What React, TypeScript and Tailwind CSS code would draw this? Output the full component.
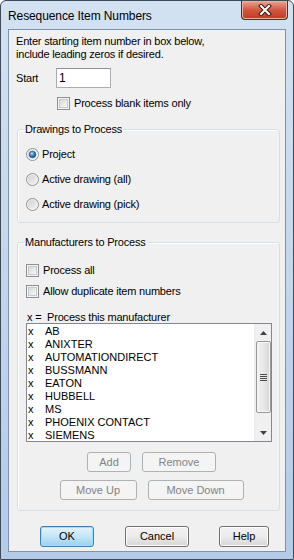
const makers = [
  'AB',
  'ANIXTER',
  'AUTOMATIONDIRECT',
  'BUSSMANN',
  'EATON',
  'HUBBELL',
  'MS',
  'PHOENIX CONTACT',
  'SIEMENS',
]

export default function App() {
  return (
    <div className="h-[560px] w-[294px] bg-white font-['Liberation_Sans',Arial,sans-serif] text-[11px] leading-[13px] text-black">
      <div className="flex h-full w-full flex-col rounded-t-[6px] border border-[#3f4a57] bg-linear-to-b from-[#d3e2f2] via-[#c2d6ec] to-[#b3cbe6] px-[7px] pb-[7px]">
        <TitleBar />
        <div className="flex flex-1 flex-col border border-[#7d92ac] bg-[#f0f0f0] pl-[7px] tracking-[-0.2px]">
          <p className="mt-[5px]">
            Enter starting item number in box below,
            <br />
            include leading zeros if desired.
          </p>
          <div className="mt-[7px] flex h-[20px] items-center">
            <span className="w-[40px]">Start</span>
            <div className="flex h-[20px] w-[55px] items-center border border-[#abadb3] border-t-[#8e9297] bg-white pl-[2px] text-[12px]">
              1
            </div>
          </div>
          <div className="ml-[41px] mt-[9px] flex items-center gap-[4px]">
            <CheckBox />
            <span>Process blank items only</span>
          </div>

          <GroupBox title="Drawings to Process" className="mt-[13px]">
            <div className="flex flex-col gap-[12px] pb-[11px] pt-[12px]">
              <RadioRow id="r0" label="Project" checked />
              <RadioRow id="r1" label="Active drawing (all)" />
              <RadioRow id="r2" label="Active drawing (pick)" />
            </div>
          </GroupBox>

          <GroupBox title="Manufacturers to Process" className="mt-[13px]">
            <div className="flex flex-col pb-[10px] pt-[15px]">
              <div className="flex items-center gap-[4px] pl-[1px]">
                <CheckBox />
                <span>Process all</span>
              </div>
              <div className="mt-[8px] flex items-center gap-[4px] pl-[1px]">
                <CheckBox />
                <span>Allow duplicate item numbers</span>
              </div>
              <p className="mt-[13px] h-[12px] pl-[2px] leading-[12px]">x =&nbsp; Process this manufacturer</p>
              <ListBox />
              <div className="mt-[10px] flex justify-center gap-[11px] pr-[1px]">
                <DisabledButton label="Add" width="w-[44px]" />
                <DisabledButton label="Remove" width="w-[74px]" />
              </div>
              <div className="mt-[8px] flex justify-center gap-[11px] pr-[1px]">
                <DisabledButton label="Move Up" width="w-[77px]" />
                <DisabledButton label="Move Down" width="w-[96px]" />
              </div>
            </div>
          </GroupBox>

          <div className="mt-[15px] flex pl-[24px] tracking-normal">
            <button className="flex h-[21px] w-[54px] items-center justify-center rounded-[3px] border border-[#3c7fb1] bg-linear-to-b from-[#e5f4fc] via-[#c4e5f6] to-[#98d1ef] shadow-[inset_0_0_0_1px_#9be1fd]">
              OK
            </button>
            <button className="ml-[31px] flex h-[21px] w-[64px] items-center justify-center rounded-[3px] border border-[#707070] bg-linear-to-b from-[#f2f2f2] via-[#ebebeb] to-[#d6d6d6] shadow-[inset_0_0_0_1px_#fcfcfc]">
              Cancel
            </button>
            <button className="ml-[30px] flex h-[21px] w-[50px] items-center justify-center rounded-[3px] border border-[#707070] bg-linear-to-b from-[#f2f2f2] via-[#ebebeb] to-[#d6d6d6] shadow-[inset_0_0_0_1px_#fcfcfc]">
              Help
            </button>
          </div>
        </div>
      </div>
    </div>
  )
}

function TitleBar() {
  return (
    <div className="flex h-[28px] items-start justify-between">
      <span className="pt-[8px] text-[12px] leading-[14px] tracking-[-0.1px] text-black">Resequence Item Numbers</span>
      <button className="mr-[-2px] flex h-[19px] w-[47px] items-center justify-center rounded-b-[4px] border border-t-0 border-[#5a2a24] bg-linear-to-b from-[#e8a593] via-[#d2553f] to-[#c23a22] shadow-[inset_0_0_0_1px_#eab0a4]">
        <svg width="14" height="12" viewBox="0 0 14 12">
          <path d="M3 2 L11 10 M11 2 L3 10" stroke="#3a1a14" strokeWidth="4" strokeLinecap="square" />
          <path d="M3 2 L11 10 M11 2 L3 10" stroke="#ffffff" strokeWidth="2" strokeLinecap="square" />
        </svg>
      </button>
    </div>
  )
}

function GroupBox({
  title,
  className,
  children,
}: {
  title: string
  className?: string
  children: React.ReactNode
}) {
  return (
    <fieldset className={`ml-[1px] w-[263px] rounded-[3px] border border-[#d5dfe5] shadow-[inset_1px_1px_0_#ffffff] ${className ?? ''}`}>
      <legend className="ml-[6px] px-[1px] leading-[13px]">{title}</legend>
      <div className="pl-[7px]">{children}</div>
    </fieldset>
  )
}

function CheckBox() {
  return (
    <span className="flex h-[13px] w-[13px] shrink-0 items-center justify-center border border-[#8f8f8f] bg-[#f4f4f4]">
      <span className="h-[9px] w-[9px] border border-[#c5cace] bg-linear-to-br from-[#d6d9dd] to-[#f7f7f7]" />
    </span>
  )
}

function RadioRow({ id, label, checked }: { id: string; label: string; checked?: boolean }) {
  return (
    <div className="flex h-[13px] items-center gap-[3px] pl-[1px]">
      <svg width="13" height="13" viewBox="0 0 13 13" className="shrink-0">
        <defs>
          <linearGradient id={`${id}g`} x1="0" y1="0" x2="1" y2="1">
            <stop offset="0" stopColor="#cdcdcd" />
            <stop offset="1" stopColor="#f8f8f8" />
          </linearGradient>
          <radialGradient id={`${id}b`} cx="0.4" cy="0.35" r="0.7">
            <stop offset="0" stopColor="#c2e4f6" />
            <stop offset="0.45" stopColor="#3b8ec6" />
            <stop offset="1" stopColor="#0c3a66" />
          </radialGradient>
        </defs>
        <circle cx="6.5" cy="6.5" r="6" fill={`url(#${id}g)`} stroke="#8e8f8f" />
        <circle cx="6.5" cy="6.5" r="5" fill="none" stroke="#f4f4f4" strokeWidth="0.8" />
        {checked && <circle cx="6.5" cy="6.5" r="3.3" fill={`url(#${id}b)`} stroke="#1f4f7d" strokeWidth="0.6" />}
      </svg>
      <span>{label}</span>
    </div>
  )
}

function ListBox() {
  return (
    <div className="ml-[1px] flex h-[119px] w-[246px] border border-[#828790] bg-white tracking-normal">
      <div className="flex flex-1 flex-col pl-[1px] pt-[1px]">
        {makers.map((name) => (
          <div key={name} className="flex h-[13px] items-center">
            <span className="w-[17px]">x</span>
            <span>{name}</span>
          </div>
        ))}
      </div>
      <Scrollbar />
    </div>
  )
}

function Scrollbar() {
  return (
    <div className="flex w-[17px] flex-col items-center border-l border-[#ebebeb] bg-[#f0f0f0]">
      <div className="flex h-[17px] w-full items-center justify-center">
        <svg width="7" height="4" viewBox="0 0 7 4">
          <path d="M3.5 0 L7 4 L0 4 Z" fill="#404040" />
        </svg>
      </div>
      <div className="flex h-[72px] w-[15px] flex-col items-center justify-center gap-[1px] rounded-[2px] border border-[#979797] bg-linear-to-r from-[#f1f1f1] via-[#e8e8e8] to-[#d4d4d4] shadow-[inset_0_0_0_1px_#f8f8f8]">
        <span className="h-[1px] w-[7px] bg-[#4a4a4a]" />
        <span className="h-[1px] w-[7px] bg-[#4a4a4a]" />
        <span className="h-[1px] w-[7px] bg-[#4a4a4a]" />
        <span className="h-[1px] w-[7px] bg-[#4a4a4a]" />
      </div>
      <div className="flex-1" />
      <div className="flex h-[17px] w-full items-center justify-center">
        <svg width="7" height="4" viewBox="0 0 7 4">
          <path d="M0 0 L7 0 L3.5 4 Z" fill="#404040" />
        </svg>
      </div>
    </div>
  )
}

function DisabledButton({ label, width }: { label: string; width: string }) {
  return (
    <div className={`flex h-[20px] ${width} items-center justify-center rounded-[3px] border border-[#adb2b5] bg-[#f4f4f4] tracking-normal text-[#838383]`}>
      {label}
    </div>
  )
}
